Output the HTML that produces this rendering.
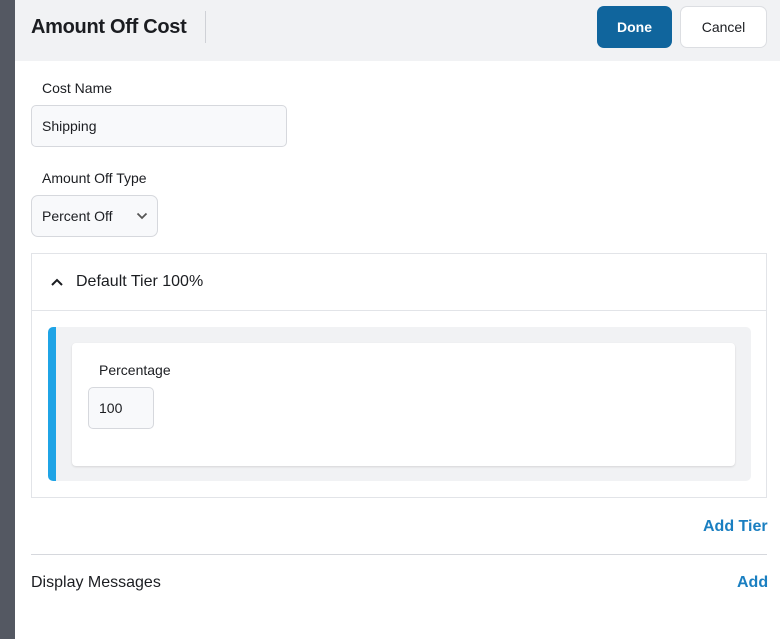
<!DOCTYPE html>
<html><head><style>
*{box-sizing:border-box;margin:0;padding:0}
body{width:780px;height:639px;overflow:hidden;background:#fff;font-family:"Liberation Sans",sans-serif;color:#1b1d21;position:relative}
.a{position:absolute}
.in{border:1px solid #d6d8dd;background:#f8f9fb;border-radius:5px;font-size:14px;display:flex;align-items:center;padding-left:10px}
.lbl{font-size:14px}
</style></head><body>
<div class="a" style="left:0;top:0;width:15px;height:639px;background:#545862"></div>
<div class="a" style="left:15px;top:0;width:765px;height:61px;background:#f1f2f4"></div>
<div class="a" style="left:31px;top:16px;font-size:20px;font-weight:bold;letter-spacing:-0.3px">Amount Off Cost</div>
<div class="a" style="left:205px;top:11px;width:1px;height:32px;background:#cfd1d6"></div>
<div class="a" style="left:597px;top:6px;width:75px;height:42px;background:#10659d;border-radius:7px;color:#fff;font-weight:bold;font-size:14px;display:flex;align-items:center;justify-content:center">Done</div>
<div class="a" style="left:680px;top:6px;width:87px;height:42px;background:#fff;border:1px solid #dcdee2;border-radius:7px;font-size:14px;display:flex;align-items:center;justify-content:center">Cancel</div>
<div class="a lbl" style="left:42px;top:80px">Cost Name</div>
<div class="a in" style="left:31px;top:105px;width:256px;height:42px">Shipping</div>
<div class="a lbl" style="left:42px;top:170px">Amount Off Type</div>
<div class="a in" style="left:31px;top:195px;width:127px;height:42px;border-radius:7px">Percent Off
<svg style="position:absolute;left:104px;top:16px" width="12" height="8" viewBox="0 0 12 8"><path d="M1.5 1.5L6 6l4.5-4.5" stroke="#555" stroke-width="1.8" fill="none"/></svg></div>
<div class="a" style="left:31px;top:253px;width:736px;height:245px;border:1px solid #e2e4e8"></div>
<div class="a" style="left:31px;top:310px;width:736px;height:1px;background:#e2e4e8"></div>
<svg class="a" style="left:50px;top:277px" width="14" height="10" viewBox="0 0 14 10"><path d="M2 8l5-5 5 5" stroke="#1b1d21" stroke-width="2" fill="none"/></svg>
<div class="a" style="left:76px;top:273px;font-size:16px">Default Tier 100%</div>
<div class="a" style="left:48px;top:327px;width:703px;height:154px;background:#f1f2f4;border-radius:5px;border-left:8px solid #1fa4e6"></div>
<div class="a" style="left:72px;top:343px;width:663px;height:123px;background:#fff;border-radius:4px;box-shadow:0 1px 2px rgba(0,0,0,.12)"></div>
<div class="a lbl" style="left:99px;top:362px">Percentage</div>
<div class="a in" style="left:88px;top:387px;width:66px;height:42px">100</div>
<div class="a" style="left:703px;top:518px;font-size:16px;font-weight:bold;color:#1a7fc1">Add Tier</div>
<div class="a" style="left:31px;top:554px;width:736px;height:1px;background:#d6d8dd"></div>
<div class="a" style="left:31px;top:574px;font-size:16px">Display Messages</div>
<div class="a" style="left:737px;top:574px;font-size:16px;font-weight:bold;color:#1a7fc1">Add</div>
</body></html>
